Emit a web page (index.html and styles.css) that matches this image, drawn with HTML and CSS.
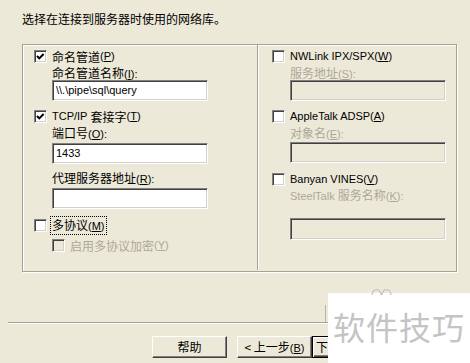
FILE: index.html
```html
<!DOCTYPE html>
<html lang="zh-CN">
<head>
    <meta charset="UTF-8">
    <title>客户端网络实用工具</title>
    <link rel="stylesheet" href="styles.css">
</head>
<body>
    <div class="dialog">
        <div class="title">选择在连接到服务器时使用的网络库。</div>

        <div class="group">
            <!-- left: enabled libraries -->
            <div class="col">
                <div class="opt"><span class="cb"><svg viewBox="0 0 11 11"><polyline points="2,5 4.3,7.4 8.6,3"/></svg></span>命名管道<span class="en">(<u>P</u>)</span></div>
                <div class="sub">
                    <div class="lbl">命名管道名称<span class="en">(<u>I</u>):</span></div>
                    <div class="field">\\.\pipe\sql\query</div>
                </div>

                <div class="opt gap"><span class="cb"><svg viewBox="0 0 11 11"><polyline points="2,5 4.3,7.4 8.6,3"/></svg></span><span class="en">TCP/IP&nbsp;</span>套接字<span class="en">(<u>T</u>)</span></div>
                <div class="sub">
                    <div class="lbl">端口号<span class="en">(<u>O</u>):</span></div>
                    <div class="field f2">1433</div>
                    <div class="lbl l3">代理服务器地址<span class="en">(<u>R</u>):</span></div>
                    <div class="field f2"></div>
                </div>

                <div class="opt gap3"><span class="cb"></span><span class="focus">多协议<span class="en">(<u>M</u>)</span></span></div>
                <div class="opt sub off gap4"><span class="cb dis"></span>启用多协议加密<span class="en">(<u>Y</u>)</span></div>
            </div>

            <!-- right: other libraries, unused -->
            <div class="col right">
                <div class="opt"><span class="cb"></span><span class="en">NWLink IPX/SPX(<u>W</u>)</span></div>
                <div class="sub off">
                    <div class="lbl">服务地址<span class="en">(<u>S</u>):</span></div>
                    <div class="field dis"></div>
                </div>

                <div class="opt gap"><span class="cb"></span><span class="en">AppleTalk ADSP(<u>A</u>)</span></div>
                <div class="sub off">
                    <div class="lbl">对象名<span class="en">(<u>E</u>):</span></div>
                    <div class="field dis f3"></div>
                </div>

                <div class="opt gap3"><span class="cb"></span><span class="en">Banyan VINES(<u>V</u>)</span></div>
                <div class="sub off">
                    <div class="lbl l4"><span class="en">SteelTalk&nbsp;</span>服务名称<span class="en">(<u>K</u>):</span></div>
                    <div class="field dis tall"></div>
                </div>
            </div>
        </div>
    </div>

    <div class="sep"></div>

    <div class="buttons">
        <div class="btn help">帮助</div>
        <div class="btn">&lt;&nbsp;上一步<span class="en">(<u>B</u>)</span></div>
        <!-- the rest of this button sits under the watermark -->
        <div class="clip">
            <div class="btn default">下</div>
        </div>
    </div>

    <div class="edge"></div>

    <div class="watermark">
        <svg class="mark" viewBox="0 0 24 8"><path d="M2 8 C2 1, 11 1, 11 8 M12 8 C12 1, 21 1, 21 8"/></svg>
        <span>软件技巧</span>
    </div>
</body>
</html>
```

FILE: styles.css
```css
body {
    margin: 0;
    width: 470px;
    height: 363px;
    overflow: hidden;
    position: relative;
    background-color: #ece9d8;
    color: #000;
    font-family: "Noto Sans CJK SC", sans-serif;
    font-size: 12px;
    line-height: 15px;
}

.en {
    font-family: "Liberation Sans", Arial, sans-serif;
    font-size: 11px;
}

u {
    text-decoration-thickness: 1px;
    text-underline-offset: 1px;
}

.dialog {
    padding: 11px 0 0 22px;
}

.title {
    height: 15px;
}

.group {
    margin-top: 18px;
    width: 435px;
    height: 228px;
    box-sizing: border-box;
    border: 1px solid #a3a295;
    box-shadow: inset 1px 1px 0 #fff, 1px 1px 0 #fff;
    display: grid;
    grid-template-columns: 234px 1fr;
}

.col {
    padding: 4px 0 0 11px;
}

.col.right {
    padding-left: 14px;
    border-left: 1px solid #a3a295;
    box-shadow: inset 1px 0 0 #fff;
    margin-bottom: 1px;
}

.opt {
    display: flex;
    align-items: center;
    height: 15px;
    white-space: nowrap;
}

.opt.gap { margin-top: 8px; }
.opt.gap3 { margin-top: 9px; }
.opt.gap4 { margin-top: 5px; }

.cb {
    width: 13px;
    height: 13px;
    box-sizing: border-box;
    margin-right: 5px;
    background: #fff;
    border: 1px solid;
    border-color: #808080 #fff #fff #808080;
    box-shadow: inset 1px 1px 0 #404040, inset -1px -1px 0 #d4d0c8;
    flex: none;
}

.cb svg {
    display: block;
    width: 11px;
    height: 11px;
    fill: none;
    stroke: #000;
    stroke-width: 2;
}

.cb.dis {
    background: #ece9d8;
}

.sub {
    margin-left: 18px;
}

.off {
    color: #aca899;
}

.lbl {
    margin-top: 2px;
    height: 14px;
    line-height: 14px;
    white-space: nowrap;
}

.lbl.l3 { margin-top: 7px; }
.lbl.l4 { margin-top: 1px; }

.field {
    width: 156px;
    height: 21px;
    box-sizing: border-box;
    padding: 0 3px;
    background: #fff;
    border: 1px solid;
    border-color: #808080 #fff #fff #808080;
    box-shadow: inset 1px 1px 0 #404040, inset -1px -1px 0 #d4d0c8;
    font-family: "Liberation Sans", Arial, sans-serif;
    font-size: 11px;
    line-height: 19px;
}

.field.f2 { margin-top: 3px; }
.field.f3 { margin-top: 2px; }

.field.dis {
    background: #ece9d8;
}

.field.tall {
    margin-top: 16px;
    height: 22px;
}

.focus {
    outline: 1px dotted #000;
    padding: 0 1px;
    margin-left: -1px;
}

.sep {
    margin: 50px 0 0 8px;
    border-top: 1px solid #a3a295;
    border-bottom: 1px solid #fff;
}

.buttons {
    display: flex;
    padding: 12px 0 0 152px;
}

.btn {
    width: 75px;
    height: 22px;
    box-sizing: border-box;
    text-align: center;
    line-height: 20px;
    white-space: nowrap;
    background: #ece9d8;
    border: 1px solid;
    border-color: #fff #404040 #404040 #fff;
    box-shadow: inset -1px -1px 0 #808080;
}

.btn.help {
    margin-right: 10px;
}

.clip {
    width: 16px;
    overflow: hidden;
    flex: none;
}

.btn.default {
    border-color: #000;
    box-shadow: inset 1px 1px 0 #fff, inset -1px -1px 0 #404040, inset -2px -2px 0 #808080;
    text-align: left;
    padding-left: 3px;
}

.edge {
    position: absolute;
    left: 325px;
    top: 305px;
    width: 1px;
    height: 17px;
    background: #b5b4a8;
}

.watermark {
    position: absolute;
    left: 328px;
    top: 293px;
    width: 142px;
    height: 70px;
    background: #fff;
    color: #c4c4c4;
    font-size: 32px;
    line-height: 32px;
    padding: 17px 0 0 5px;
    box-sizing: border-box;
    letter-spacing: 1px;
    white-space: nowrap;
}

.mark {
    position: absolute;
    left: 42px;
    top: -6px;
    width: 24px;
    height: 8px;
    fill: none;
    stroke: #bdbdbd;
    stroke-width: 1.2;
}
```
